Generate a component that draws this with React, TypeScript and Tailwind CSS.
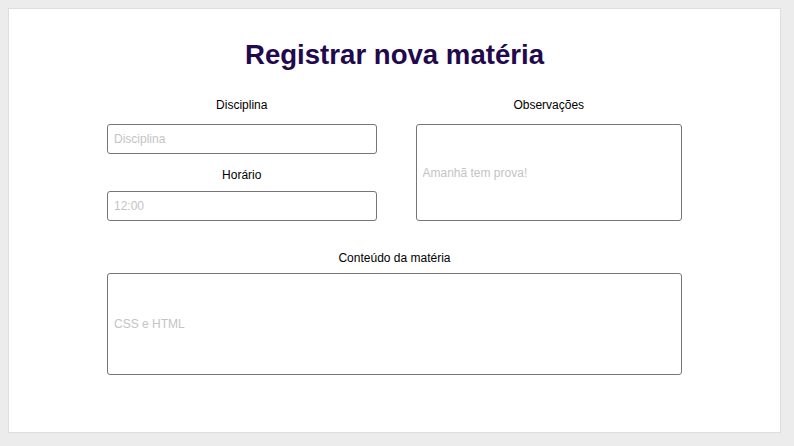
export default function App() {
	return (
		<div className="min-h-screen bg-[#ececec] p-2 font-['Liberation_Sans',Arial,sans-serif]">
			<main className="w-[773px] h-[425px] bg-white border border-[#dedede] flex flex-col items-center">
				<h1 className="mt-[30px] text-[27.6px] leading-8 font-bold text-[#22094d]">Registrar nova matéria</h1>
				<form className="mt-[26px] w-[575px] flex flex-col">
					<div className="flex gap-[39px]">
						<div className="w-[270px] flex flex-col">
							<label className="text-xs text-black text-center">Disciplina</label>
							<input
								className="mt-[11px] h-[30px] border border-[#767676] rounded-[3px] px-[6px] text-xs outline-none placeholder:text-[#c4c4c4]"
								placeholder="Disciplina"
							/>
							<label className="mt-[13px] text-xs text-black text-center">Horário</label>
							<input
								className="mt-[8px] h-[30px] border border-[#767676] rounded-[3px] px-[6px] text-xs outline-none placeholder:text-[#c4c4c4]"
								placeholder="12:00"
							/>
						</div>
						<div className="w-[267px] flex flex-col">
							<label className="text-xs text-black text-center">Observações</label>
							<input
								className="mt-[11px] h-[97px] border border-[#767676] rounded-[3px] px-[6px] text-xs outline-none placeholder:text-[#c4c4c4]"
								placeholder="Amanhã tem prova!"
							/>
						</div>
					</div>
					<label className="mt-[29px] text-xs text-black text-center">Conteúdo da matéria</label>
					<input
						className="mt-[7px] h-[102px] border border-[#767676] rounded-[3px] px-[6px] text-xs outline-none placeholder:text-[#c4c4c4]"
						placeholder="CSS e HTML"
					/>
				</form>
			</main>
		</div>
	)
}
